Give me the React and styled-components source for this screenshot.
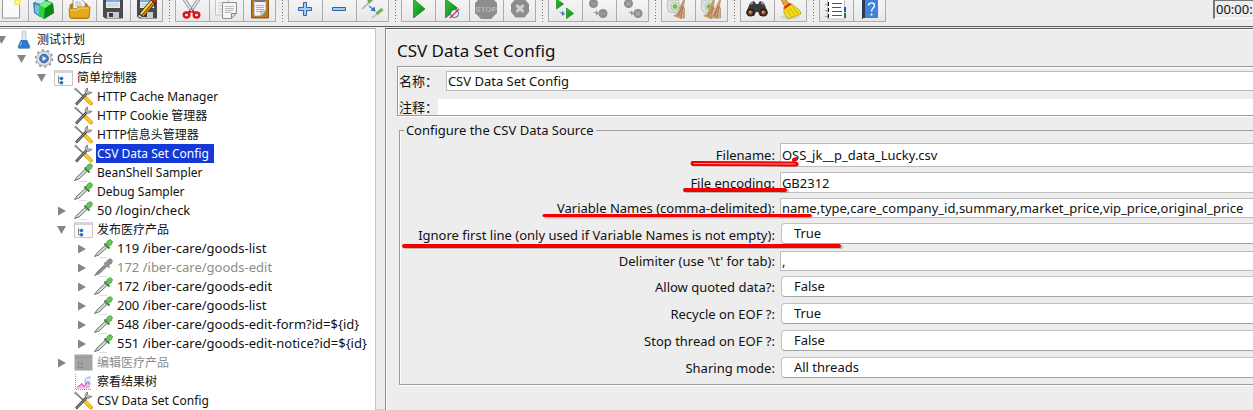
import React from "react";
import styled, { createGlobalStyle, css } from "styled-components";

const sans = `"Noto Sans", "Noto Sans CJK SC", sans-serif`;

const GlobalStyle = createGlobalStyle`
  * { box-sizing: border-box; }
  body { margin: 0; background: #ededed; color: #111; font: 13px/18px ${sans}; overflow: hidden; }
  input, select, button { font: inherit; color: inherit; }
`;

const Window = styled.div`
  display: flex;
  flex-direction: column;
  min-height: 100vh;
  overflow: hidden;
`;

/* ---------- tool bar ---------- */
const Toolbar = styled.header`
  display: flex;
  align-items: flex-start;
  height: 27px;
  border-bottom: 1px solid #5c5c5c;
  overflow: hidden;
`;
const ToolGroups = styled.div`
  display: flex;
  flex: none;
  margin-left: -6px;
`;
const ToolGroup = styled.div`
  display: flex;
  flex: none;
  & + & { margin-left: 12px; }
  & + &::before {
    content: "";
    width: 1px;
    margin: 0 5px 0 -6px;
    background: repeating-linear-gradient(#777 0 1px, transparent 1px 3px);
  }
`;
const ToolButton = styled.button`
  width: 34px;
  height: 22px;
  padding: 0 0 0 3px;
  display: flex;
  border: 1px solid #acacac;
  border-width: 0 0 1px 1px;
  background: linear-gradient(#f4f4f4, #e8e8e8);
  &:last-child { border-right-width: 1px; width: 33px; }
  svg { display: block; flex: none; }
`;
const Timer = styled.output`
  flex: none;
  width: 40px;
  height: 19px;
  margin-left: auto;
  padding-left: 1px;
  border: 1px solid #777;
  border-width: 1px 0 1px 2px;
  border-bottom-color: #fff;
  line-height: 17px;
  white-space: nowrap;
`;

/* ---------- body ---------- */
const Body = styled.div`
  display: flex;
  flex: 1;
  margin-top: 1px;
`;
const Tree = styled.ul`
  flex: none;
  width: 30%;
  margin: 0;
  padding: 1px 0 0;
  list-style: none;
  background: #fff;
  border-top: 1px solid #a6a6a6;
  border-right: 1px solid #c4c4c4;
  font-size: 12px;
  line-height: 19px;
  overflow: hidden;
`;
const Splitter = styled.div`
  flex: none;
  width: 9px;
  background: #ededed;
  border-bottom: 1px solid #ccc;
`;
const TreeRow = styled.li`
  display: flex;
  align-items: center;
  height: 19px;
  padding-left: ${(p) => p.$level * 20}px;
  color: ${(p) => (p.$off ? "#8c8c8c" : "#111")};
  white-space: nowrap;
`;
const Disclosure = styled.svg`
  flex: none;
  width: 10px;
  height: 10px;
  margin: 0 7px 0 -3px;
`;
const NodeIcon = styled.svg`
  flex: none;
  width: 20px;
  height: 19px;
  margin-right: 2px;
`;
const NodeLabel = styled.span`
  height: 19px;
  padding: 0 5px 0 1px;
  font-size: ${(p) => (p.$request ? 13 : 12)}px;
  ${(p) => p.$selected && css`background: #1539d6; color: #fff;`}
`;

/* ---------- editor ---------- */
const Editor = styled.main`
  position: relative;
  flex: 1;
  min-width: 0;
  padding: 10px 0 24px 10px;
  border-top: 1px solid #5c5c5c;
  border-left: 1px solid #8a8a8a;
  box-shadow: inset 1px 1px 0 #fff;
  overflow: hidden;
`;
const Title = styled.h1`
  margin: 0 0 3px 1px;
  font-size: 17px;
  line-height: 24px;
  font-weight: 400;
`;
const NameBox = styled.section`
  margin: 0 -8px 0 1px;
  padding: 4px 0 0 1px;
  border: 1px solid #999;
  box-shadow: 0 1px 0 #fff, inset 1px 1px 0 #fff;
`;
const NameRow = styled.div`
  display: flex;
  height: ${(p) => (p.$last ? 16 : 20)}px;
  align-items: center;
  & + & { margin-top: 8px; }
  label {
    flex: none;
    width: ${(p) => (p.$last ? 39 : 47)}px;
  }
`;
const field = css`
  min-width: 0;
  width: 100%;
  height: 100%;
  margin: 0;
  outline: 0;
  background: #fff;
`;
const TextInput = styled.input`
  ${field}
  padding: 0 1px;
  border: ${(p) => (p.$plain ? "0" : "1px solid #bcbcbc")};
  border-radius: 0;
`;
const Choice = styled.select`
  ${field}
  appearance: none;
  height: 21px;
  margin-left: 1px;
  padding: 0 12px 1px;
  border: 1px solid #c2c2c2;
  border-bottom-color: #a4a4a4;
  border-radius: 4px;
`;
const Source = styled.fieldset`
  min-width: 0;
  margin: 5px -8px 0 3px;
  padding: 4px 0 5px;
  border: 1px solid #9c9c9c;
  box-shadow: 0 1px 0 #fff, inset 1px 0 0 #fff;
`;
const Legend = styled.legend`
  margin-left: 4px;
  padding: 0 2px;
  line-height: 18px;
`;
const Grid = styled.div`
  display: grid;
  grid-template-columns: 375px 1fr;
  grid-template-rows: 24px 21px 20px 23px 20px;
  grid-auto-rows: 22px;
  gap: 5px;
  label {
    align-self: center;
    text-align: right;
    white-space: nowrap;
  }
`;
const Marker = styled.svg`
  position: absolute;
  left: 0;
  top: 0;
  width: 500px;
  height: 230px;
  pointer-events: none;
`;

/* ---------- tool bar drawings ---------- */
const Floppy = () => (
  <>
    <path d="M3 0h20v18.500h-18l-2-2z" fill="#484c50" />
    <path d="M6 0h14v8h-14z" fill="#e9edf2" />
    <path d="M6 0h14v2h-14z" fill="#7ea9d8" />
    <path d="M7 4h12M7 6h12" stroke="#bcc3ca" />
    <path d="M7 12h12v6h-12z" fill="#c9cccf" />
    <path d="M9 13h4v4h-4z" fill="#3a3d40" />
  </>
);
const Gear = () => (
  <>
    <path d="M3 0h11v12l-3 1-7-1-2-5z" fill="#dfe1df" stroke="#bfc2bf" />
    <circle cx="10" cy="6.500" r="4" fill="#f1f1f1" stroke="#b5b5b5" />
    <circle cx="10" cy="6.500" r="2.500" fill="#6cc63c" />
  </>
);
const Bristles = () => (
  <>
    <path d="M18 0l2 0-1 6 1 3 0 9-4 1-8-3 4-3 3-7z" fill="#c49a70" />
    <path d="M17 6l-4 10M18 7l-2 11" stroke="#94663c" strokeWidth=".7" />
    <path d="M16 7l-5 8M18.500 9l-1 9" stroke="#e6c7a2" strokeWidth=".8" />
  </>
);
const greenPlay = (d) => <path d={d} fill="url(#play)" stroke="#08860f" strokeWidth=".7" />;
const tools = {
  New: (
    <>
      <path d="M4.500 -1h17v19h-17z" fill="#fafafa" stroke="#999" />
      <circle cx="19.500" cy="2" r="3.500" fill="#f8e95a" />
      <circle cx="19.500" cy="2" r="1.300" fill="#fff" />
    </>
  ),
  Templates: (
    <>
      <path d="M1 3l5-3h10v12l-8 5-6-4z" fill="#3f86b5" />
      <path d="M3 4l4 2v9l-4-3z" fill="#79bfe0" />
      <path d="M4 0h9l-2 4-7-1z" fill="#c8e6f3" />
      <path d="M7 5l7-5 7 3 1 10-10 6-5-3z" fill="#15aa2b" />
      <path d="M7 5l6 3-1 11-5-3z" fill="#27d63c" />
      <path d="M13 8l8-4 1 9-10 6z" fill="#08871a" />
      <path d="M7 5l6-4 7 2-7 5z" fill="#79ef7e" />
    </>
  ),
  Open: (
    <>
      <path d="M3.500 5l3-2h14l3 5v8l-2 3h-16l-2-3z" fill="#b77a0b" />
      <path d="M7 -1h8l4 4v6h-12z" fill="#fafafa" stroke="#999" />
      <path d="M9 2h6M9 4h7M9 6h7" stroke="#b5b5b5" />
      <path d="M3 9h7l2-2h12l-1 11h-19z" fill="#e5a91f" stroke="#b87c08" />
      <path d="M4 10h7l2-2h10" stroke="#ffd96a" fill="none" />
    </>
  ),
  Save: <Floppy />,
  "Save as": (
    <>
      <Floppy />
      <path d="M4 18l1.500-5 12-14 5 4-13 13.500z" fill="#262016" />
      <path d="M6 13.500l11-13 1.700 1.400-11 13z" fill="#ffcf3e" />
      <path d="M8 15.500l11-13 1.500 1.300-11 12.500z" fill="#d88b11" />
      <path d="M17 0l4 3 2-3-4-2z" fill="#d12a20" />
      <path d="M4 18l1-3.500 3 2z" fill="#f1d9ab" />
    </>
  ),
  Cut: (
    <>
      <path d="M5 -1l9 13M20 -1l-9 13" stroke="#8a8e92" strokeWidth="3.400" />
      <path d="M5 -1l9 13M20 -1l-9 13" stroke="#e4e7ea" strokeWidth="1.800" />
      <circle cx="12.600" cy="9" r="1" fill="#777" />
      <ellipse cx="7.500" cy="15" rx="2.800" ry="2.500" fill="none" stroke="#df1119" strokeWidth="2.400" />
      <ellipse cx="17.500" cy="15" rx="2.800" ry="2.500" fill="none" stroke="#df1119" strokeWidth="2.400" />
      <path d="M9 13l3-2M16 13l-3-2" stroke="#df1119" strokeWidth="2.400" />
    </>
  ),
  Copy: (
    <>
      <path d="M2.500 -1h13v16h-13z" fill="#f2f2f2" stroke="#c4c4c4" />
      <path d="M5 3h8M5 6h4M5 9h4M5 12h4" stroke="#ccc" />
      <path d="M9.500 2.500h14v11l-5 5h-9z" fill="#f5f5f5" stroke="#8e8e8e" />
      <path d="M12 6.500h9M12 8.500h9M12 10.500h8M12 12.500h6" stroke="#bbb" />
      <path d="M18.500 18.500v-5h5z" fill="#ddd" stroke="#888" />
    </>
  ),
  Paste: (
    <>
      <path d="M4.500 -1h17v19h-17z" fill="#bc7a20" stroke="#8d5410" />
      <path d="M7 1h12v10l-4 5h-8z" fill="#f4f4f4" stroke="#888" strokeWidth=".7" />
      <path d="M8 -1h10v3h-10z" fill="#777" />
      <path d="M9 5.500h8M9 7.500h8M9 9.500h8M9 11.500h5" stroke="#b5b5b5" />
      <path d="M14 16v-5h5z" fill="#d4d4d4" stroke="#888" strokeWidth=".7" />
    </>
  ),
  "Expand all": <path d="M11.500 2.500h3v5h5v3h-5v5h-3v-5h-5v-3h5z" fill="#a8cdf0" stroke="#2d62ab" />,
  "Collapse all": <path d="M6.500 7.500h13v3h-13z" fill="#a8cdf0" stroke="#2d62ab" />,
  Toggle: (
    <>
      <path d="M2 9l9-8" stroke="#b9bcb9" strokeWidth="2" />
      <path d="M8 2l4-3" stroke="#67aa49" strokeWidth="3" />
      <path d="M12 18l6-5" stroke="#c3c6c3" strokeWidth="2" />
      <path d="M16.500 14l6-5" stroke="#69b54b" strokeWidth="3" />
      <path d="M9 6l5 4" stroke="#377fdf" strokeWidth="1.500" />
      <path d="M15.500 11.500l-5-1 4-4z" fill="#2a70d8" />
    </>
  ),
  Start: greenPlay("M8.500 -1l11.500 10-11.500 9z"),
  "Start no pauses": (
    <>
      {greenPlay("M6.500 -1l12 9-12 10z")}
      <circle cx="15.500" cy="13.500" r="4" fill="#e7f2fc" stroke="#2866aa" />
      <path d="M11 18l9-9" stroke="#e33131" strokeWidth="1.400" />
    </>
  ),
  Stop: (
    <>
      <path d="M8 -3h10l6 6v10l-6 6h-10l-6-6v-10z" fill="#8d8d8d" />
      <text x="13" y="12" textAnchor="middle" fontFamily="Liberation Sans" fontWeight="700" fontSize="8" fill="#b5b5b5">STOP</text>
    </>
  ),
  Shutdown: (
    <>
      <path d="M8.500 -1h9l4.500 5v8l-4.500 5.500h-9l-4.500-5.500v-8z" fill="#8d8d8d" />
      <path d="M9.500 5l7 7M16.500 5l-7 7" stroke="#d0d0d0" strokeWidth="3" />
    </>
  ),
  "Remote start all": (
    <>
      {greenPlay("M4.500 -1l7 5-7 5z")}
      {greenPlay("M14.500 8l7 5.500-7 5z")}
      <path d="M7 12.500h3v-2l3 3.500-3 2v-2z" fill="#4677b9" />
    </>
  ),
  "Remote stop all": (
    <>
      <circle cx="7.500" cy="3.500" r="4.500" fill="#8d8d8d" />
      <circle cx="17" cy="13.500" r="4.500" fill="#8d8d8d" />
      <path d="M5 3.500h5M14.500 13.500h5" stroke="#a0a0a0" strokeWidth="1.400" />
      <path d="M7 12h3v-2l3 3.500-3 2v-2z" fill="#969696" />
    </>
  ),
  "Remote shutdown all": (
    <>
      <circle cx="8.500" cy="3.500" r="4.500" fill="#8d8d8d" />
      <circle cx="18" cy="13.500" r="4.500" fill="#8d8d8d" />
      <path d="M6.500 1.500l4 4M10.500 1.500l-4 4M16 11.500l4 4M20 11.500l-4 4" stroke="#b0b0b0" strokeWidth="1.300" />
      <path d="M8 12h3v-2l3 3.500-3 2v-2z" fill="#969696" />
    </>
  ),
  Clear: (<><Gear /><Bristles /></>),
  "Clear all": (
    <>
      <Gear />
      <g transform="translate(-4 0)"><Bristles /></g>
      <g transform="translate(2 0)"><Bristles /></g>
    </>
  ),
  Search: (
    <>
      <path d="M2 13l4-10 4-2 2 3h2l2-3 4 2 4 10-3 3h-5l-2-4h-2l-2 4h-5z" fill="#3b3b3b" />
      <path d="M6 4l3-1M20 4l-3-1" stroke="#9a9a9a" strokeWidth="1.500" />
      <circle cx="6.500" cy="12.500" r="4" fill="#222" />
      <circle cx="19.500" cy="12.500" r="4" fill="#222" />
      <circle cx="6.500" cy="12.500" r="2.300" fill="#b3541d" />
      <circle cx="19.500" cy="12.500" r="2.300" fill="#b3541d" />
      <circle cx="6" cy="12" r="1" fill="#f1a567" />
      <circle cx="19" cy="12" r="1" fill="#f1a567" />
    </>
  ),
  "Reset search": (
    <>
      <ellipse cx="12" cy="17" rx="10" ry="2" fill="#d6d6d6" />
      <path d="M2 -2l4-1 5 7-4 3z" fill="#e3a93e" stroke="#ad7418" strokeWidth=".8" />
      <path d="M6 8l8-4 8 7 1 3-13 5-4-6z" fill="#f5dc1b" stroke="#b19b0c" strokeWidth=".8" />
      <path d="M5 8l6-5 3 1-7 5z" fill="#e02a1c" />
      <path d="M9 9l4 8M12 8l5 8M14 6l6 8" stroke="#c1a70b" strokeWidth=".8" />
    </>
  ),
  "Function helper": (
    <>
      <path d="M4.500 -1h17v20h-17z" fill="#fff" stroke="#bbb" />
      <path d="M9 3.500h10M9 7.500h9M9 11.500h10M9 15.500h10" stroke="#1f55f5" />
      <path d="M2 4.500h4M2 10.500h4M2 16.500h4" stroke="#999" />
      <path d="M5.500 2v4M5.500 8v4M5.500 14v4" stroke="#111" />
      <path d="M21 7h2v5h-2z" fill="#1b51ce" />
      <path d="M21 13h2v5h-2z" fill="#16832d" />
    </>
  ),
  Help: (
    <>
      <path d="M5 0h5v19h-5z" fill="#2c3b51" />
      <path d="M8 -1h13v19h-13z" fill="#3f83dc" />
      <path d="M6 18.500h14" stroke="#e5e5e5" />
      <path d="M11.500 5.500c0-3.500 6-3.500 6 0 0 2.500-3 2.500-3 6" fill="none" stroke="#fff" strokeWidth="1.400" />
      <circle cx="14.500" cy="14.500" r="1.100" fill="#fff" />
    </>
  ),
};
const groups = [
  ["New", "Templates", "Open", "Save", "Save as"],
  ["Cut", "Copy", "Paste"],
  ["Expand all", "Collapse all", "Toggle"],
  ["Start", "Start no pauses", "Stop", "Shutdown"],
  ["Remote start all", "Remote stop all", "Remote shutdown all"],
  ["Clear", "Clear all"],
  ["Search", "Reset search"],
  ["Function helper", "Help"],
];

/* ---------- tree drawings ---------- */
const dropper = (off) => (
  <>
    <path d="M5 18.500h8" stroke="#dedede" />
    <path d="M.5 17.500l2.500-3.500 8-7.500 2 2-8 7.500z" fill={off ? "#8d8d8d" : "#d3dbd7"} stroke={off ? "#8d8d8d" : "#6c736f"} />
    <path d="M10.500 4.500l5 5" stroke={off ? "#888" : "#3b7a36"} strokeWidth="1.800" />
    <path d="M12 5.500l1.500-3.500 3-1.500 2 2-1 3-3.500 2z" fill={off ? "#8d8d8d" : "#68c45a"} stroke={off ? "#8d8d8d" : "#4a9c40"} strokeWidth=".8" />
  </>
);
const nodeIcons = {
  plan: (
    <>
      <path d="M8 1h4v7l4 8q1 3-2 3h-8q-3 0-2-3l4-8z" fill="#dfe7ed" stroke="#b5bdc4" strokeWidth=".7" />
      <path d="M7 10h6l3 6.500q0 2-2 2h-8q-2 0-2-2z" fill="#2a78cf" />
      <path d="M8 12l-2 4" stroke="#8fc8f5" />
    </>
  ),
  threads: (
    <>
      <circle cx="10" cy="9.500" r="8.500" fill="none" stroke="#9296a0" strokeWidth="1.500" strokeDasharray="2.500 2.840" />
      <circle cx="10" cy="9.500" r="7.300" fill="#e3e6ec" stroke="#8e949e" strokeWidth=".8" />
      <circle cx="10" cy="9.500" r="4.300" fill="#4a80cc" stroke="#3c5680" />
      <path d="M8.500 7l4 2.500-4 2.500z" fill="#e7f3ff" />
    </>
  ),
  controller: (
    <>
      <path d="M.5 2.500h18v15h-18z" fill="#fbfbfb" stroke="#c6c6c6" />
      <path d="M1 2h17v3h-17z" fill="#d3d5d8" />
      <path d="M4.500 8v7M4.500 10.500h2M4.500 15h2" stroke="#888" fill="none" />
      <circle cx="7.500" cy="10.500" r="1.800" fill="#1f70dc" />
      <circle cx="7.500" cy="14.700" r="1.800" fill="#1f70dc" />
    </>
  ),
  controllerOff: (
    <>
      <path d="M.5 1.500h18v16h-18z" fill="#a4a4a4" />
      <path d="M1 4.500h17" stroke="#959595" />
      <path d="M4.500 8v7M4.500 10.500h4M4.500 14.500h4" stroke="#8c8c8c" fill="none" />
      <circle cx="8" cy="10.500" r="1" fill="#888" />
      <circle cx="8" cy="14.500" r="1" fill="#888" />
    </>
  ),
  config: (
    <>
      <path d="M1 1.500l12 11" stroke="#666" strokeWidth="1.500" />
      <path d="M.8 1.300l3.700 3.200" stroke="#999" strokeWidth="2.200" />
      <path d="M11 10.500l6 6" stroke="#b98a10" strokeWidth="3.800" strokeLinecap="round" />
      <path d="M11 10.500l6 6" stroke="#ffc820" strokeWidth="2.600" strokeLinecap="round" />
      <path d="M2 17.500l10.500-11" stroke="#444" strokeWidth="2.600" />
      <path d="M2.500 17l10-10.500" stroke="#aaa" strokeWidth="1" />
      <path d="M13.500 1c-2.500 1-3 4-1.500 5.500s4.500 1 6-1.500l-3 .3-1.500-1.600z" fill="#b5b5b5" stroke="#666" strokeWidth=".7" />
    </>
  ),
  sampler: dropper(false),
  samplerOff: dropper(true),
  results: (
    <>
      <path d="M1.500 2v15.500h16" stroke="#999" strokeDasharray="1 1" fill="none" />
      <path d="M11 12l2-6 4-2v8z" fill="#d7efff" />
      <path d="M16.500 5q-7 0-5 7" stroke="#6aaef0" fill="none" />
      <path d="M3 16.500l5-5 2 3 4-5 2 3v4z" fill="#f9aef0" />
      <path d="M3 15.500l5-4 2 3 4-5 2 3" stroke="#cc4a8e" fill="none" />
    </>
  ),
};

const nodes = [
  [0, "open", "plan", "测试计划"],
  [1, "open", "threads", "OSS后台"],
  [2, "open", "controller", "简单控制器"],
  [3, null, "config", "HTTP Cache Manager"],
  [3, null, "config", "HTTP Cookie 管理器"],
  [3, null, "config", "HTTP信息头管理器"],
  [3, null, "config", "CSV Data Set Config", "selected"],
  [3, null, "sampler", "BeanShell Sampler"],
  [3, null, "sampler", "Debug Sampler"],
  [3, "closed", "sampler", "50 /login/check"],
  [3, "open", "controller", "发布医疗产品"],
  [4, "closed", "sampler", "119 /iber-care/goods-list"],
  [4, "closed", "samplerOff", "172 /iber-care/goods-edit", "off"],
  [4, "closed", "sampler", "172 /iber-care/goods-edit"],
  [4, "closed", "sampler", "200 /iber-care/goods-list"],
  [4, "closed", "sampler", "548 /iber-care/goods-edit-form?id=${id}"],
  [4, "closed", "sampler", "551 /iber-care/goods-edit-notice?id=${id}"],
  [3, "closed", "controllerOff", "编辑医疗产品", "off"],
  [3, null, "results", "察看结果树"],
  [3, null, "config", "CSV Data Set Config"],
];

const fields = [
  ["filename", "Filename:", "OSS_jk__p_data_Lucky.csv"],
  ["encoding", "File encoding:", "GB2312"],
  ["variables", "Variable Names (comma-delimited):", "name,type,care_company_id,summary,market_price,vip_price,original_price"],
  ["ignore", "Ignore first line (only used if Variable Names is not empty):", "True", ["True", "False"]],
  ["delimiter", "Delimiter (use '\\t' for tab):", ","],
  ["quoted", "Allow quoted data?:", "False", ["True", "False"]],
  ["recycle", "Recycle on EOF ?:", "True", ["True", "False"]],
  ["stop", "Stop thread on EOF ?:", "False", ["True", "False"]],
  ["sharing", "Sharing mode:", "All threads", ["All threads", "Current thread group", "Current thread"]],
];

const arrows = { open: "M0 1h9l-4.500 8z", closed: "M1 0.500l8 4.500-8 4.500z" };

export default function App() {
  return (
    <Window>
      <GlobalStyle />
      <Toolbar>
        <ToolGroups>
          {groups.map((names) => (
            <ToolGroup key={names[0]}>
              {names.map((name) => (
                <ToolButton key={name} type="button" aria-label={name}>
                  <svg width="26" height="20" viewBox="0 0 26 20">
                    <defs>
                      <linearGradient id="play" x1="0" y1="0" x2="1" y2="1">
                        <stop offset="0" stopColor="#35c83a" />
                        <stop offset="1" stopColor="#067f10" />
                      </linearGradient>
                    </defs>
                    {tools[name]}
                  </svg>
                </ToolButton>
              ))}
            </ToolGroup>
          ))}
        </ToolGroups>
        <Timer>00:00:</Timer>
      </Toolbar>
      <Body>
        <Tree>
          {nodes.map(([level, arrow, icon, label, state], i) => (
            <TreeRow key={i} $level={level} $off={state === "off"}>
              <Disclosure viewBox="0 0 10 10">{arrow && <path d={arrows[arrow]} fill="#868686" />}</Disclosure>
              <NodeIcon viewBox="0 0 20 19">{nodeIcons[icon]}</NodeIcon>
              <NodeLabel $selected={state === "selected"} $request={label.includes("/")}>{label}</NodeLabel>
            </TreeRow>
          ))}
        </Tree>
        <Splitter />
        <Editor>
          <Title>CSV Data Set Config</Title>
          <NameBox>
            <NameRow>
              <label htmlFor="name">名称：</label>
              <TextInput id="name" defaultValue="CSV Data Set Config" />
            </NameRow>
            <NameRow $last>
              <label htmlFor="comment">注释：</label>
              <TextInput id="comment" $plain />
            </NameRow>
          </NameBox>
          <Source>
            <Legend>Configure the CSV Data Source</Legend>
            <Grid>
              {fields.map(([id, label, value, options]) => (
                <React.Fragment key={id}>
                  <label htmlFor={id}>{label}</label>
                  {options ? (
                    <Choice id={id} defaultValue={value}>
                      {options.map((o) => <option key={o}>{o}</option>)}
                    </Choice>
                  ) : (
                    <TextInput id={id} defaultValue={value} />
                  )}
                </React.Fragment>
              ))}
            </Grid>
          </Source>
          <Marker viewBox="386 29 500 230" aria-hidden="true">
            <g fill="none" stroke="#999" strokeOpacity=".6" strokeLinecap="round" strokeWidth="4" transform="translate(1 1)">
              <path d="M693 163.500l103 .5M685 190h101M545 215.500l265 0M404 246l436 0" />
            </g>
            <g fill="none" stroke="#f40000" strokeLinecap="round">
              <path d="M693 163.500l103 .5" strokeWidth="5" />
              <path d="M685 190h100" strokeWidth="4" />
              <path d="M544 215.500l266 0" strokeWidth="3" />
              <path d="M404 246l435 0" strokeWidth="4" />
              <path d="M794 160l2-1" strokeWidth="4" />
              <path d="M694 163.500l101 .5" stroke="#ff9a9a" strokeWidth="1" />
            </g>
          </Marker>
        </Editor>
      </Body>
    </Window>
  );
}
